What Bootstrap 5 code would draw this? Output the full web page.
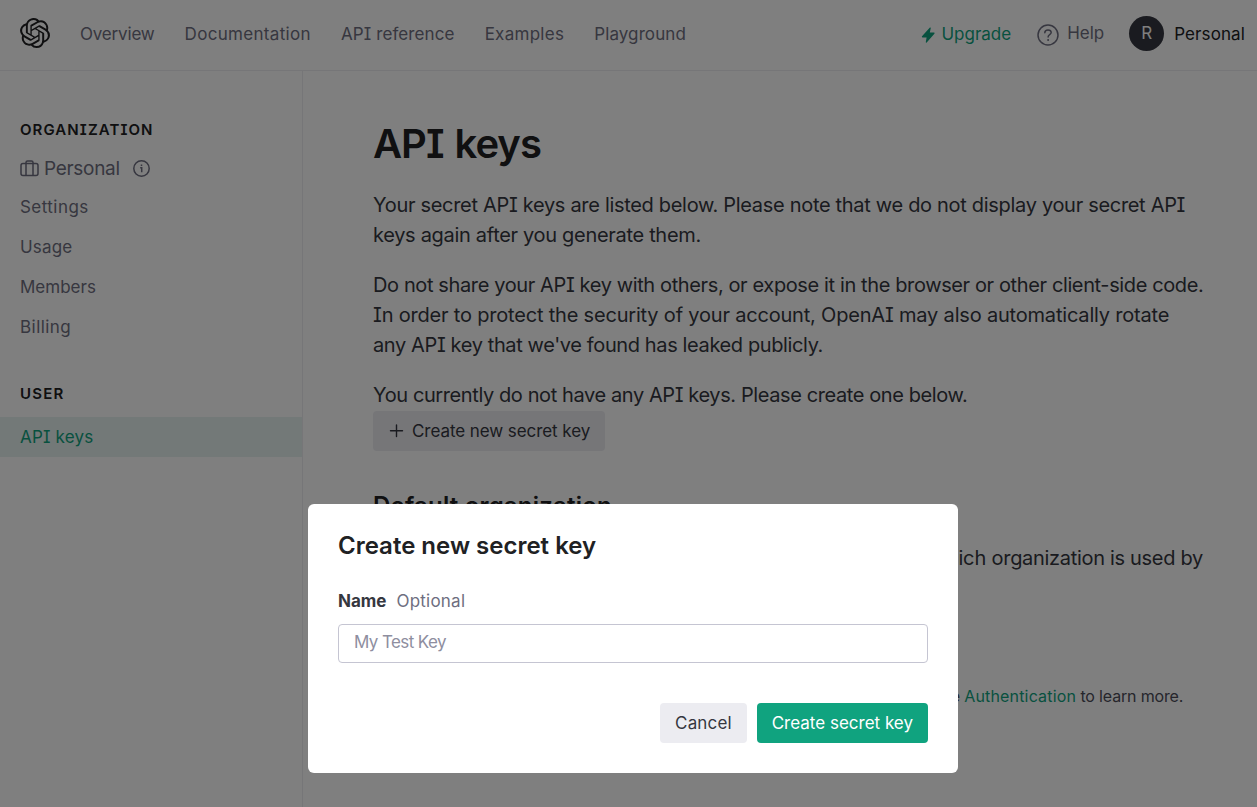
<!DOCTYPE html>
<html lang="en">
<head>
<meta charset="utf-8">
<meta name="viewport" content="width=device-width, initial-scale=1">
<title>API keys</title>
<link href="https://cdn.jsdelivr.net/npm/bootstrap@5.3.0/dist/css/bootstrap.min.css" rel="stylesheet">
<style>
:root{--ink:#202123;--text:#353740;--muted:#6e6e80;--green:#10a37f}
html,body{height:100%}
body{font-family:Inter,"Liberation Sans",sans-serif;font-feature-settings:"cv08";color:var(--text);overflow:hidden;font-size:17px;background:#fff}
a{text-decoration:none;color:inherit}
.green,a.green{color:var(--green)}
.topbar{height:71px;border-bottom:1px solid #ececf1;padding:0 12px 4px 20px}
.topbar .links{gap:30px;margin-left:30px;color:var(--muted);line-height:24px;padding-top:1px}
.topbar .links a:nth-child(1){letter-spacing:-.18px}
.topbar .links a:nth-child(2){letter-spacing:.32px}
.topbar .links a:nth-child(3){letter-spacing:.11px}
.topbar .links a:nth-child(4){letter-spacing:.28px}
.topbar .links a:nth-child(5){letter-spacing:.1px}
.low{padding-top:3px}
.upgrade svg{margin-right:6px}
.help{color:var(--muted);margin-left:26px;gap:8px;padding-top:2px}
.help svg{margin-top:1px}
.account{margin-left:25px;gap:10px;color:var(--ink);letter-spacing:.1px}
.avatar{width:35px;height:35px;background:var(--text);color:#fff;font-size:17px;padding-top:1px}
.body-row{height:calc(100% - 71px);overflow:hidden}
.side{width:303px;border-right:1px solid #ececf1;padding-top:49px;color:var(--muted)}
.side h6{font-size:15px;font-weight:600;letter-spacing:1.08px;color:var(--ink);line-height:20px;margin:0;padding-left:20px}
.side h6.user{margin:37px 0 13px;letter-spacing:1.2px}
.side a{display:block;height:40px;line-height:40px;padding-left:20px}
.side a.wide{letter-spacing:.45px}
.side a.semi{letter-spacing:.18px}
.side a.active{background:#e6f2f0;color:var(--green)}
.org{font-size:19px;padding-left:20px;height:37px;margin-top:10px;letter-spacing:-.3px}
.org svg{margin-top:-1px}
.page{padding:50px 0 0 70px}
.page h1{font-size:40px;line-height:46px;font-weight:600;color:var(--ink);margin:0 0 23px;letter-spacing:-1px;word-spacing:2px}
.page h2{font-size:24px;line-height:30px;font-weight:600;color:var(--ink);margin:40px 0 22px;letter-spacing:.2px}
.page p{font-size:20px;line-height:30px;margin:0 0 20px;white-space:nowrap;letter-spacing:-.31px}
.page p .tight{letter-spacing:-.38px}
.page p .loose{letter-spacing:-.19px}
.page p .tighter{letter-spacing:-.4px}
.page p.note{font-size:16px;margin-top:78px;letter-spacing:-.165px;color:#4c4c58}
.page p.note a{letter-spacing:.17px}
.btn-soft{background:#ececf1;color:var(--text)}
.btn-key{height:40px;font-size:17px;border:0;border-radius:4px;padding:0 15px;line-height:40px;white-space:nowrap}
.btn-new{margin-top:1px;letter-spacing:-.07px;gap:8px}
.btn-go{background:var(--green);color:#fff}
.shade{background:rgba(0,0,0,.5)}
.dialog-box{left:308px;top:504px;width:650px;height:269px;background:#fff;border-radius:6px;padding:30px}
.dialog-box h3{font-size:24px;line-height:24px;font-weight:600;color:var(--ink);margin:0}
.field-label{margin:31px 0 11px;line-height:24px;gap:10px}
.field-label span{color:var(--muted);letter-spacing:.22px}
.dialog-box .form-control{height:39px;border:1px solid #c5c5d2;border-radius:4px;padding:0 15px 3px;font-size:17px;color:var(--text);letter-spacing:-.6px}
.dialog-box .form-control::placeholder{color:#8e8ea0}
.actions{gap:10px;margin-top:40px}
</style>
</head>
<body>
<header class="topbar d-flex align-items-center">
  <svg width="30" height="30" viewBox="0 0 24 24" fill="#202123"><path d="M22.2819 9.8211a5.9847 5.9847 0 0 0-.5157-4.9108 6.0462 6.0462 0 0 0-6.5098-2.9A6.0651 6.0651 0 0 0 4.9807 4.1818a5.9847 5.9847 0 0 0-3.9977 2.9 6.0462 6.0462 0 0 0 .7427 7.0966 5.98 5.98 0 0 0 .511 4.9107 6.051 6.051 0 0 0 6.5146 2.9001A5.9847 5.9847 0 0 0 13.2599 24a6.0557 6.0557 0 0 0 5.7718-4.2058 5.9894 5.9894 0 0 0 3.9977-2.9001 6.0557 6.0557 0 0 0-.7475-7.0729zm-9.022 12.6081a4.4755 4.4755 0 0 1-2.8764-1.0408l.1419-.0804 4.7783-2.7582a.7948.7948 0 0 0 .3927-.6813v-6.7369l2.02 1.1686a.071.071 0 0 1 .038.052v5.5826a4.504 4.504 0 0 1-4.4945 4.4944zm-9.6607-4.1254a4.4708 4.4708 0 0 1-.5346-3.0137l.142.0852 4.783 2.7582a.7712.7712 0 0 0 .7806 0l5.8428-3.3685v2.3324a.0804.0804 0 0 1-.0332.0615L9.74 19.9502a4.4992 4.4992 0 0 1-6.1408-1.6464zM2.3408 7.8956a4.485 4.485 0 0 1 2.3655-1.9728V11.6a.7664.7664 0 0 0 .3879.6765l5.8144 3.3543-2.0201 1.1685a.0757.0757 0 0 1-.071 0l-4.8303-2.7865A4.504 4.504 0 0 1 2.3408 7.872zm16.5963 3.8558L13.1038 8.364 15.1192 7.2a.0757.0757 0 0 1 .071 0l4.8303 2.7913a4.4944 4.4944 0 0 1-.6765 8.1042v-5.6772a.79.79 0 0 0-.407-.667zm2.0107-3.0231l-.142-.0852-4.7735-2.7818a.7759.7759 0 0 0-.7854 0L9.409 9.2297V6.8974a.0662.0662 0 0 1 .0284-.0615l4.8303-2.7866a4.4992 4.4992 0 0 1 6.6802 4.66zM8.3065 12.863l-2.02-1.1638a.0804.0804 0 0 1-.038-.0567V6.0742a4.4992 4.4992 0 0 1 7.3757-3.4537l-.142.0805L8.704 5.459a.7948.7948 0 0 0-.3927.6813zm1.0976-2.3654l2.602-1.4998 2.6069 1.4998v2.9994l-2.5974 1.4997-2.6067-1.4997Z"/></svg>
  <nav class="links d-flex"><a href="#">Overview</a><a href="#">Documentation</a><a href="#">API reference</a><a href="#">Examples</a><a href="#">Playground</a></nav>
  <div class="d-flex align-items-center ms-auto">
    <a href="#" class="upgrade green low d-flex align-items-center"><svg width="14" height="16" viewBox="0 0 14 16" fill="currentColor"><path d="M8.900.600 1 9.200c-.4.500-.1 1.200.5 1.200h4.100l-.8 4.700c-.1.600.5.800.9.400l7.700-8.700c.4-.500.100-1.200-.5-1.200H8.800l1-4.600c.1-.600-.5-.8-.9-.4z"/></svg><span>Upgrade</span></a>
    <a href="#" class="help d-flex align-items-center"><svg width="22" height="22" viewBox="0 0 22 22" fill="none" stroke="currentColor" stroke-width="1.500" stroke-linecap="round"><circle cx="11" cy="11" r="10"/><path d="M7.800 8.700C7.800 6.900 9.200 5.900 11 5.900s3.200 1.100 3.200 2.700c0 2-3.100 2.200-3.100 4.300"/><path d="M11.100 15.900v.1" stroke-width="2"/></svg><span>Help</span></a>
    <div class="account d-flex align-items-center"><span class="avatar rounded-circle d-flex align-items-center justify-content-center">R</span><span class="low">Personal</span></div>
  </div>
</header>
<div class="body-row d-flex">
  <aside class="side flex-shrink-0">
    <h6>ORGANIZATION</h6>
    <div class="org d-flex align-items-center">
      <svg width="19" height="17" viewBox="0 0 19 17" fill="none" stroke="currentColor" stroke-width="1.500"><rect x="1" y="3.500" width="17" height="12" rx="2"/><path d="M6 15.500V2.500a1.500 1.500 0 0 1 1.500-1.500h4A1.500 1.500 0 0 1 13 2.500v13"/></svg>
      <span style="margin-left:5px;padding-top:1px">Personal</span>
      <svg width="17" height="17" viewBox="0 0 17 17" fill="none" stroke="currentColor" stroke-width="1.500" style="margin-left:13px"><circle cx="8.500" cy="8.500" r="7.700"/><path d="M7.200 7.800h1.500v4.500M8.500 4.600v1.500"/></svg>
    </div>
    <a href="#" class="wide">Settings</a><a href="#" class="semi">Usage</a><a href="#">Members</a><a href="#" class="wide">Billing</a>
    <h6 class="user">USER</h6>
    <a href="#" class="semi active">API keys</a>
  </aside>
  <main class="page">
    <h1>API keys</h1>
    <p>Your secret API keys are listed below. Please note that we do not display your secret API<br>keys again after you generate them.</p>
    <p><span class="tight">Do not share your API key with others, or expose it in the browser or other client-side code.</span><br><span class="loose">In order to protect the security of your account, OpenAI may also automatically rotate</span><br><span class="tight">any API key that we've found has leaked publicly.</span></p>
    <p class="mb-0"><span class="tighter">You currently do not have any API keys. Please create one below.</span></p>
    <button class="btn-key btn-soft btn-new d-flex align-items-center"><svg width="16" height="16" viewBox="0 0 16 16" stroke="currentColor" stroke-width="1.400" stroke-linecap="round"><path d="M8.500 2v11.500M2.500 7.700h12"/></svg><span>Create new secret key</span></button>
    <h2>Default organization</h2>
    <p><span style="letter-spacing:-.14px">If you belong to multiple organizations, this setting controls which </span>organization is used by<br>default when making requests with the API keys above.</p>
    <p class="note">Note: You can also specify which organization to use for each API request. See <a class="green" href="#">Authentication</a> to learn more.</p>
  </main>
</div>
<div class="shade position-fixed top-0 start-0 w-100 h-100"></div>
<section class="dialog-box position-fixed" role="dialog">
  <h3>Create new secret key</h3>
  <div class="field-label d-flex"><label for="kn" class="fw-bold">Name</label><span>Optional</span></div>
  <input id="kn" class="form-control" placeholder="My Test Key">
  <div class="actions d-flex justify-content-end"><button class="btn-key btn-soft" style="letter-spacing:.14px">Cancel</button><button class="btn-key btn-go">Create secret key</button></div>
</section>
<script src="https://cdn.jsdelivr.net/npm/bootstrap@5.3.0/dist/js/bootstrap.bundle.min.js"></script>
</body>
</html>
